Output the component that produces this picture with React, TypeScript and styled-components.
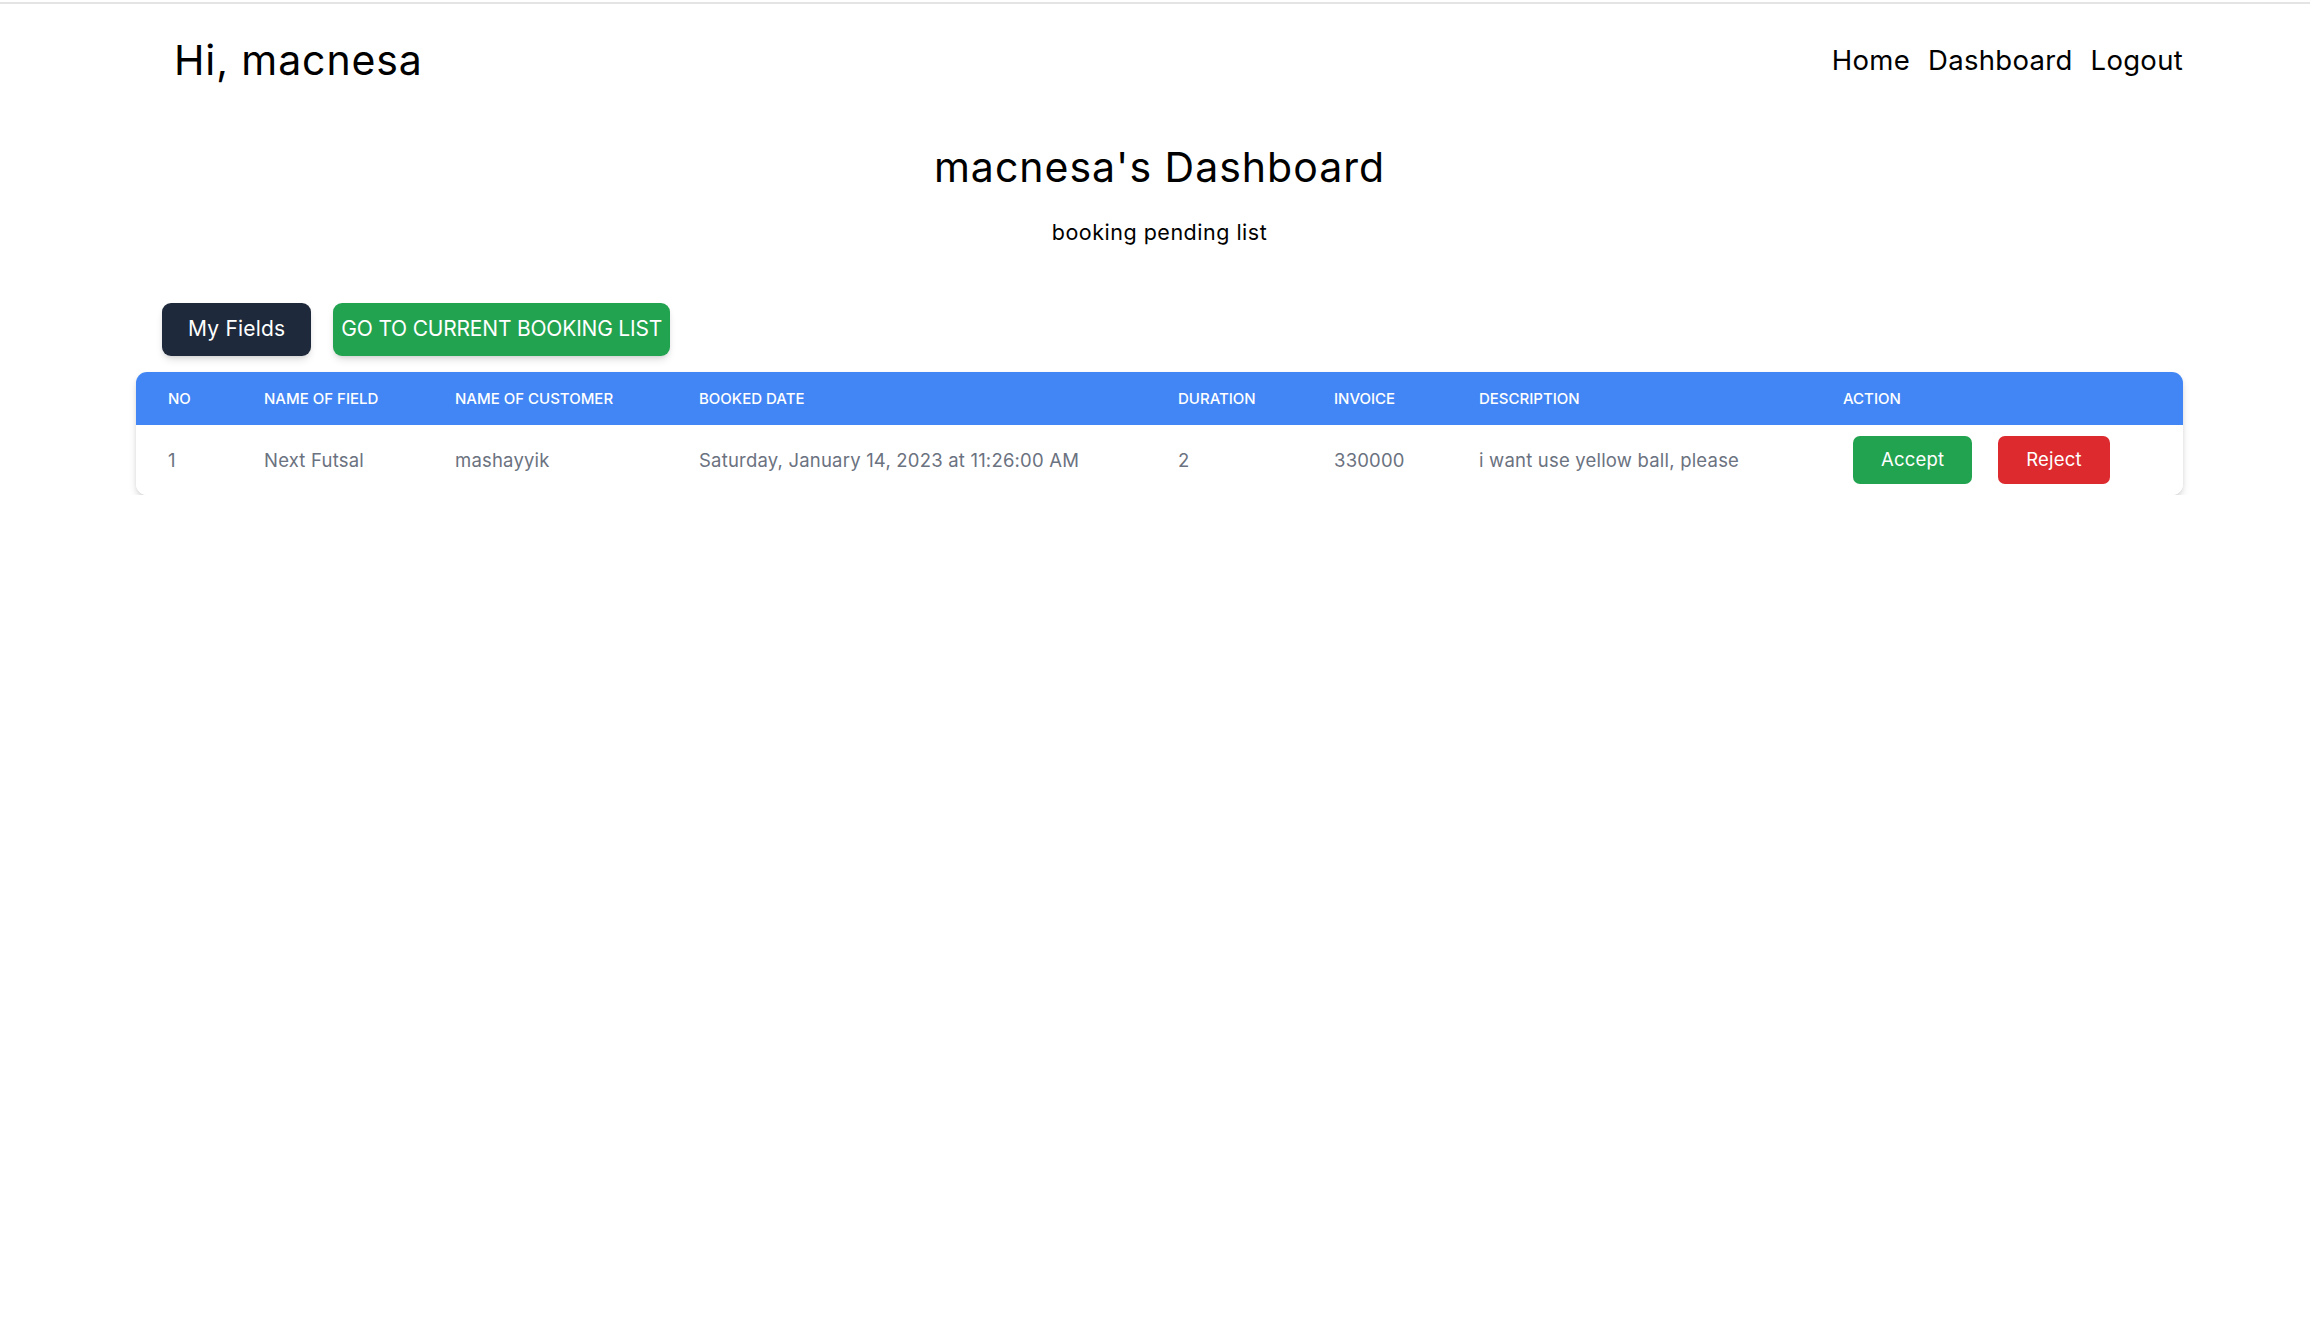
import React from "react";
import styled, { createGlobalStyle } from "styled-components";

const Global = createGlobalStyle`
  html, body { margin: 0; padding: 0; background: #ffffff; }
  body { font-family: "Inter", "Noto Sans", sans-serif; color: #000; }
  * { box-sizing: border-box; }
`;

const TopRule = styled.div`
  margin-top: 2px;
  height: 2px;
  background: #e4e4e4;
`;

const Page = styled.div`
  padding: 0 127px 0 136px;
`;

const Header = styled.header`
  display: flex;
  align-items: center;
  justify-content: space-between;
  padding: 26px 0 0 38px;
`;

const Greeting = styled.h1`
  margin: 0;
  font-size: 41px;
  line-height: 60px;
  font-weight: 400;
  letter-spacing: 0.9px;
`;

const Nav = styled.nav`
  display: flex;
  gap: 18px;
`;

const NavLink = styled.a`
  font-size: 27.5px;
  line-height: 60px;
  letter-spacing: 0.3px;
  color: #000;
  text-decoration: none;
`;

const Title = styled.h2`
  margin: 47px 0 0;
  text-align: center;
  font-size: 41px;
  line-height: 60px;
  font-weight: 400;
  letter-spacing: 1px;
`;

const Subtitle = styled.p`
  margin: 19px 0 0;
  text-align: center;
  font-size: 21.5px;
  line-height: 32px;
  letter-spacing: 0.5px;
`;

const Toolbar = styled.div`
  display: flex;
  gap: 22px;
  margin: 54.5px 0 0 26px;
`;

const Button = styled.button<{ $tone: "dark" | "green" | "red"; $size?: "lg" | "sm" }>`
  border: none;
  cursor: pointer;
  font-family: inherit;
  color: #fff;
  border-radius: ${(p) => (p.$size === "sm" ? "7px" : "9px")};
  background: ${(p) => (p.$tone === "dark" ? "#1e293b" : p.$tone === "green" ? "#22a350" : "#dc2a2f")};
  font-size: ${(p) => (p.$size === "sm" ? "18.5px" : "21px")};
  line-height: ${(p) => (p.$size === "sm" ? "26.7px" : "32px")};
  padding: 10.6px ${(p) => (p.$size === "sm" ? "28px" : "26px")};
  letter-spacing: 0.2px;
  box-shadow: ${(p) =>
    p.$size === "sm" ? "none" : "0 5px 8px -2px rgba(0,0,0,0.14), 0 2px 5px -2px rgba(0,0,0,0.12)"};
`;

const WideButton = styled(Button)`
  padding-left: 8px;
  padding-right: 8px;
  letter-spacing: -0.2px;
`;

const TableCard = styled.div`
  margin-top: 16px;
  border-radius: 11px;
  overflow: hidden;
  box-shadow: 0 5px 9px -1px rgba(0, 0, 0, 0.14), 0 2px 5px -1px rgba(0, 0, 0, 0.1);
`;

const Table = styled.table`
  width: 100%;
  border-collapse: collapse;
  table-layout: fixed;
`;

const HeadRow = styled.tr`
  background: #4286f5;
`;

const Th = styled.th`
  padding: 0 32px;
  height: 53px;
  text-align: left;
  color: #fff;
  font-size: 15px;
  font-weight: 500;
  text-transform: uppercase;
  white-space: nowrap;
`;

const Td = styled.td`
  padding: 0 32px;
  height: 70px;
  color: #6b7280;
  font-size: 18.5px;
  letter-spacing: 0.2px;
  white-space: nowrap;
  background: #fff;
`;

const Actions = styled.div`
  display: flex;
  gap: 26px;
  margin-left: 10px;
`;

const columns = [96, 191, 244, 479, 156, 145, 364, 372];
const heads = [
  "No",
  "Name of field",
  "Name of customer",
  "Booked date",
  "Duration",
  "Invoice",
  "Description",
  "Action",
];

const bookings = [
  {
    no: 1,
    field: "Next Futsal",
    customer: "mashayyik",
    date: "Saturday, January 14, 2023 at 11:26:00 AM",
    duration: 2,
    invoice: 330000,
    description: "i want use yellow ball, please",
  },
];

export default function App() {
  return (
    <>
      <Global />
      <TopRule />
      <Page>
        <Header>
          <Greeting>Hi, macnesa</Greeting>
          <Nav>
            <NavLink href="#">Home</NavLink>
            <NavLink href="#">Dashboard</NavLink>
            <NavLink href="#">Logout</NavLink>
          </Nav>
        </Header>
        <Title>macnesa's Dashboard</Title>
        <Subtitle>booking pending list</Subtitle>
        <Toolbar>
          <Button $tone="dark">My Fields</Button>
          <WideButton $tone="green">GO TO CURRENT BOOKING LIST</WideButton>
        </Toolbar>
        <TableCard>
          <Table>
            <colgroup>
              {columns.map((w, i) => (
                <col key={i} style={{ width: w }} />
              ))}
            </colgroup>
            <thead>
              <HeadRow>
                {heads.map((h) => (
                  <Th key={h}>{h}</Th>
                ))}
              </HeadRow>
            </thead>
            <tbody>
              {bookings.map((b) => (
                <tr key={b.no}>
                  <Td>{b.no}</Td>
                  <Td>{b.field}</Td>
                  <Td>{b.customer}</Td>
                  <Td>{b.date}</Td>
                  <Td>{b.duration}</Td>
                  <Td>{b.invoice}</Td>
                  <Td>{b.description}</Td>
                  <Td>
                    <Actions>
                      <Button $tone="green" $size="sm">Accept</Button>
                      <Button $tone="red" $size="sm">Reject</Button>
                    </Actions>
                  </Td>
                </tr>
              ))}
            </tbody>
          </Table>
        </TableCard>
      </Page>
    </>
  );
}
